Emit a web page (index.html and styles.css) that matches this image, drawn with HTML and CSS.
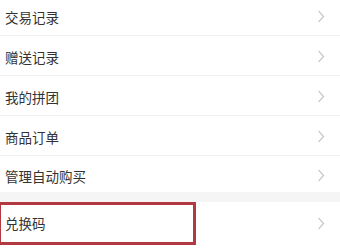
FILE: index.html
```html
<!DOCTYPE html>
<html lang="zh-CN">
<head>
<meta charset="utf-8">
<link rel="stylesheet" href="styles.css">
</head>
<body>
<div class="page">
  <ul class="menu">
    <li class="row"><span class="label">交易记录</span><svg class="chev" viewBox="0 0 8 13"><path d="M1.5 1 L6.5 6.5 L1.5 12"/></svg></li>
    <li class="row"><span class="label">赠送记录</span><svg class="chev" viewBox="0 0 8 13"><path d="M1.5 1 L6.5 6.5 L1.5 12"/></svg></li>
    <li class="row"><span class="label">我的拼团</span><svg class="chev" viewBox="0 0 8 13"><path d="M1.5 1 L6.5 6.5 L1.5 12"/></svg></li>
    <li class="row"><span class="label">商品订单</span><svg class="chev" viewBox="0 0 8 13"><path d="M1.5 1 L6.5 6.5 L1.5 12"/></svg></li>
    <li class="row last"><span class="label">管理自动购买</span><svg class="chev" viewBox="0 0 8 13"><path d="M1.5 1 L6.5 6.5 L1.5 12"/></svg></li>
  </ul>
  <div class="gap"></div>
  <ul class="menu">
    <li class="row code"><span class="label">兑换码</span><svg class="chev" viewBox="0 0 8 13"><path d="M1.5 1 L6.5 6.5 L1.5 12"/></svg><span class="highlight"></span></li>
  </ul>
</div>
</body>
</html>
```
FILE: styles.css
```css
html, body {
  margin: 0;
  padding: 0;
  background: #ffffff;
}
body {
  width: 340px;
  height: 250px;
  overflow: hidden;
  font-family: "Noto Sans CJK SC", "Noto Sans", sans-serif;
}
.page {
  margin-top: -4px;
}
.menu {
  list-style: none;
  margin: 0;
  padding: 0;
}
.row {
  position: relative;
  height: 37px;
  border-bottom: 1px solid #f0f0f0;
  display: flex;
  align-items: center;
  justify-content: space-between;
  padding: 2px 15px 0 5px;
}
.row.last {
  height: 33px;
  border-bottom: none;
  padding-top: 3px;
}
.label {
  font-size: 13.5px;
  color: #333333;
  line-height: 20px;
}
.chev {
  width: 8px;
  height: 13px;
  fill: none;
  stroke: #b8b8b8;
  stroke-width: 1.1;
}
.gap {
  height: 10px;
  background: #f5f5f5;
}
.row.code {
  height: 42px;
  padding-top: 0;
  border-bottom: none;
}
.highlight {
  position: absolute;
  left: -2px;
  top: 0;
  width: 192px;
  height: 37px;
  border: 3px solid #b23940;
  pointer-events: none;
}
```
